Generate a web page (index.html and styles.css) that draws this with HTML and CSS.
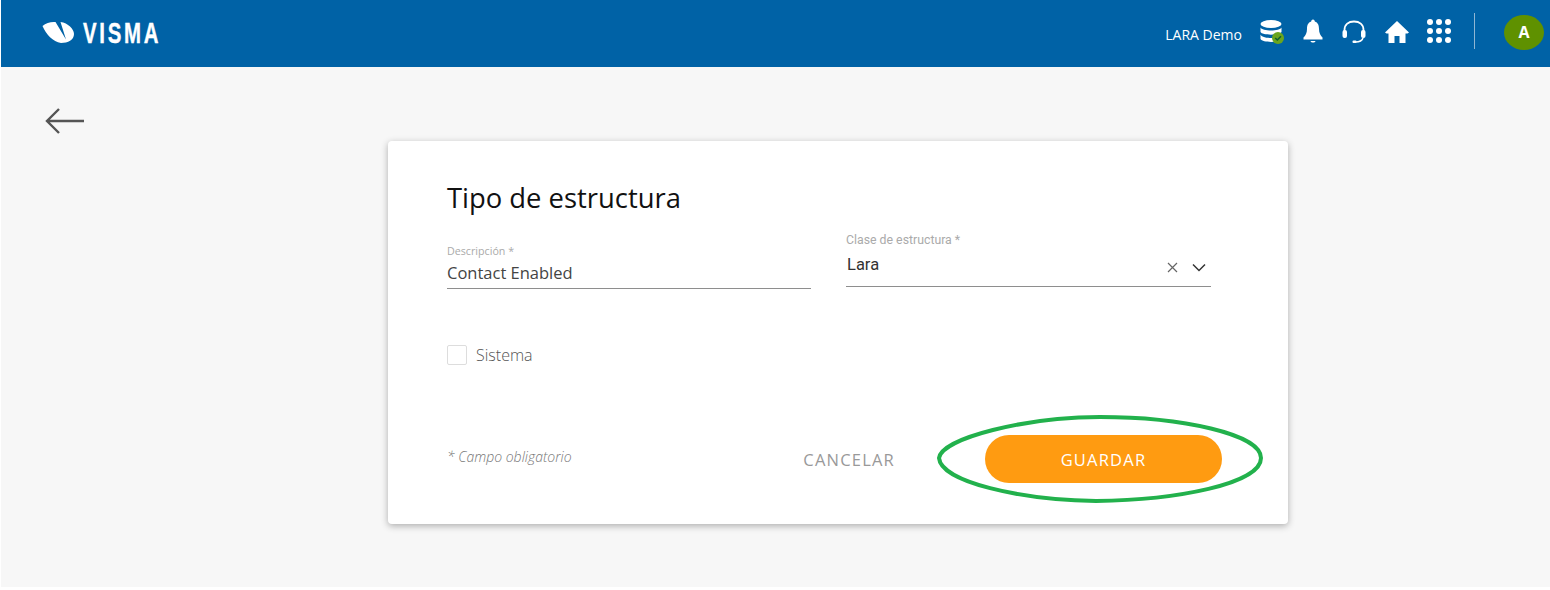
FILE: index.html
```html
<!DOCTYPE html>
<html lang="es">
<head>
<meta charset="UTF-8">
<meta name="viewport" content="width=device-width, initial-scale=1.0">
<title>Tipo de estructura</title>
<link rel="stylesheet" href="styles.css">
</head>
<body>
<header class="topbar">
    <div class="brand">
        <svg class="brand-mark" width="33" height="23" viewBox="0 0 33 23">
            <path d="M0.500 5 C4 2 9 0.500 13.500 1 L24 18.500 L18.500 1 C26 2 32 8 32 13 C32 19 26 22 19 22 C11 21 4 13 0.500 5 Z" fill="#fff"/>
        </svg>
        <span class="brand-name">VISMA</span>
    </div>
    <div class="topbar-right">
        <span class="user-name">LARA Demo</span>
        <svg class="icon icon-db" width="26" height="26" viewBox="0 0 26 26">
            <ellipse cx="12" cy="5" rx="10.500" ry="4" fill="#fff"/>
            <path d="M1.500 8.500 C3 12.500 21 12.500 22.500 8.500 V13 C21 16.500 3 16.500 1.500 13 Z" fill="#fff"/>
            <path d="M1.500 15.500 C3 19.500 15 19.500 17 18.500 L17 22.500 C11 23.500 3 22.500 1.500 20 Z" fill="#fff"/>
            <circle cx="19" cy="19" r="6" fill="#6aa51e"/>
            <path d="M16.200 19 L18.300 21 L22 17.200" fill="none" stroke="#0f5f2e" stroke-width="1.500"/>
        </svg>
        <svg class="icon icon-bell" width="22" height="25" viewBox="0 0 22 25">
            <path d="M11 0.500 C12.200 0.500 12.800 1.500 12.800 2.500 C16 3.500 17 6.500 17 10 C17 14 18.500 16.500 20.500 18.500 V20.500 H1.500 V18.500 C3.500 16.500 5 14 5 10 C5 6.500 6 3.500 9.200 2.500 C9.200 1.500 9.800 0.500 11 0.500 Z" fill="#fff"/>
            <path d="M8.500 22 H13.500 C13 24 9 24 8.500 22 Z" fill="#fff"/>
        </svg>
        <svg class="icon icon-headset" width="26" height="26" viewBox="0 0 26 26">
            <path d="M3.500 13 V11 C3.500 5.500 7.500 2.500 13 2.500 C18.500 2.500 22.500 5.500 22.500 11 V13" fill="none" stroke="#fff" stroke-width="1.800"/>
            <rect x="1.500" y="11" width="4.500" height="8" rx="2" fill="#fff"/>
            <rect x="20" y="11" width="4.500" height="8" rx="2" fill="#fff"/>
            <path d="M22 19 C21 22 18 23 14.500 23" fill="none" stroke="#fff" stroke-width="1.500"/>
            <rect x="11.500" y="21.500" width="4" height="2.500" rx="1" fill="#fff"/>
        </svg>
        <svg class="icon icon-home" width="26" height="24" viewBox="0 0 26 24">
            <path d="M13 1 L25 12.500 L23.500 13.500 H21.500 V23 H15.500 V16 H10.500 V23 H4.500 V13.500 H2.500 L1 12.500 Z" fill="#fff"/>
        </svg>
        <div class="apps">
            <i></i><i></i><i></i><i></i><i></i><i></i><i></i><i></i><i></i>
        </div>
        <div class="divider"></div>
        <div class="avatar">A</div>
    </div>
</header>

<main class="content">
    <svg class="back" width="39" height="28" viewBox="0 0 39 28">
        <path d="M39 14 H2 M14 2 L2 14 L14 26" fill="none" stroke="#555" stroke-width="2.400"/>
    </svg>

    <section class="card">
        <h1>Tipo de estructura</h1>
        <div class="fields">
            <div class="field field-text">
                <label>Descripción *</label>
                <div class="value">Contact Enabled</div>
            </div>
            <div class="field field-select">
                <label>Clase de estructura *</label>
                <div class="value">
                    <span>Lara</span>
                    <svg width="46" height="12" viewBox="0 0 46 12">
                        <path d="M3 2 L12 11 M12 2 L3 11" fill="none" stroke="#666" stroke-width="1.200"/>
                        <path d="M28 3.500 L34 9.500 L40 3.500" fill="none" stroke="#333" stroke-width="1.500"/>
                    </svg>
                </div>
            </div>
        </div>
        <div class="check-row">
            <span class="checkbox"></span>
            <span>Sistema</span>
        </div>
        <div class="card-footer">
            <em class="required">* Campo obligatorio</em>
            <div class="actions">
                <button class="btn btn-text">CANCELAR</button>
                <button class="btn btn-save">GUARDAR</button>
                <svg class="highlight" width="328" height="90" viewBox="0 0 328 90">
                    <path d="M3 44 C6 24 90 3 164 3 C245 3 325 20 325 44 C325 70 240 86 160 87 C85 86 5 68 3 44 Z" fill="none" stroke="#22b14c" stroke-width="4"/>
                </svg>
            </div>
        </div>
    </section>
</main>
</body>
</html>
```

FILE: styles.css
```css
html, body {
    margin: 0;
    height: 100%;
    overflow: hidden;
}

body {
    background: #fff;
    font-family: "Open Sans", sans-serif;
    padding-left: 1px;
    box-sizing: border-box;
}

.topbar {
    display: flex;
    justify-content: space-between;
    align-items: center;
    height: 67px;
    background: #0062a6;
    color: #fff;
}

.brand {
    display: flex;
    align-items: center;
    gap: 8px;
    margin-left: 41px;
    margin-top: -2px;
}

.brand-name {
    display: inline-block;
    width: 76px;
    font-family: "Liberation Sans", sans-serif;
    font-weight: 700;
    font-size: 30px;
    line-height: 30px;
    letter-spacing: 4px;
    -webkit-text-stroke: 0.4px #fff;
    transform: scaleX(0.68);
    transform-origin: left center;
    white-space: nowrap;
}

.topbar-right {
    display: flex;
    align-items: center;
    margin-right: 6px;
}

.user-name {
    font-size: 14px;
    margin-right: 17px;
    margin-top: 2px;
}

.icon {
    display: block;
    margin-top: -4px;
    margin-right: 17px;
}

.apps {
    display: grid;
    grid-template-columns: repeat(3, 6px);
    gap: 3px;
    margin-top: -5px;
}

.apps i {
    width: 6px;
    height: 6px;
    border-radius: 50%;
    background: #fff;
}

.divider {
    width: 1px;
    height: 36px;
    background: #8fb6d3;
    margin: -5px 29px 0 23px;
}

.avatar {
    width: 40px;
    height: 35px;
    border-radius: 50%;
    background: #5f9100;
    font-weight: 700;
    font-size: 16px;
    line-height: 35px;
    text-align: center;
    margin-top: -3px;
}

.content {
    position: relative;
    height: 520px;
    background: #f7f7f7;
    padding-top: 74px;
    box-sizing: border-box;
}

.back {
    position: absolute;
    left: 44px;
    top: 40px;
}

.card {
    width: 900px;
    height: 383px;
    margin-left: 387px;
    box-sizing: border-box;
    padding: 41px 76px 0 59px;
    background: #fff;
    border-radius: 4px;
    box-shadow: 0 2px 7px rgba(0, 0, 0, 0.3);
}

h1 {
    margin: 0;
    font-weight: 400;
    font-size: 27.400px;
    line-height: 32px;
    color: #111;
}

.fields {
    display: flex;
    align-items: flex-end;
    gap: 35px;
    margin-top: 18px;
}

.field {
    width: 364px;
    border-bottom: 1px solid #8e8e8e;
}

.field label {
    display: block;
}

.field-text label {
    font-size: 10.700px;
    line-height: 15px;
    margin-bottom: 3px;
    color: #aaa;
}

.field-text .value {
    font-size: 16.500px;
    line-height: 22px;
    padding-bottom: 4px;
    color: #444;
}

.field-text {
    margin-bottom: -2px;
}

.field-select {
    width: 365px;
    font-family: "Roboto", sans-serif;
}

.field-select label {
    font-size: 12.300px;
    line-height: 16px;
    margin-bottom: 5px;
    color: #aaa;
}

.field-select .value {
    display: flex;
    justify-content: space-between;
    align-items: flex-end;
    font-size: 16.500px;
    line-height: 22px;
    height: 33px;
    color: #333;
}

.field-select .value span {
    align-self: flex-start;
    margin-top: 1px;
    padding-left: 1px;
}

.field-select .value svg {
    margin-bottom: 13px;
}

.check-row {
    display: flex;
    align-items: center;
    gap: 9px;
    margin-top: 57px;
    font-size: 16px;
    font-weight: 300;
    color: #555;
}

.checkbox {
    width: 18px;
    height: 18px;
    border: 1px solid #ddd;
    border-radius: 2px;
    background: #fff;
}

.card-footer {
    display: flex;
    justify-content: space-between;
    align-items: center;
    margin-top: 69px;
}

.required {
    font-size: 14px;
    font-weight: 300;
    color: #777;
    margin-top: -5px;
}

.actions {
    position: relative;
    display: flex;
    align-items: center;
    gap: 90px;
    margin-right: -10px;
}

.btn {
    border: none;
    font-family: "Open Sans", sans-serif;
    font-size: 16.500px;
    letter-spacing: 1.200px;
    padding: 0;
}

.btn-text {
    background: none;
    color: #999;
}

.btn-save {
    width: 237px;
    height: 48px;
    border-radius: 24px;
    background: #ff9b11;
    color: #fff;
}

.highlight {
    position: absolute;
    right: -42px;
    top: -21px;
}
```
